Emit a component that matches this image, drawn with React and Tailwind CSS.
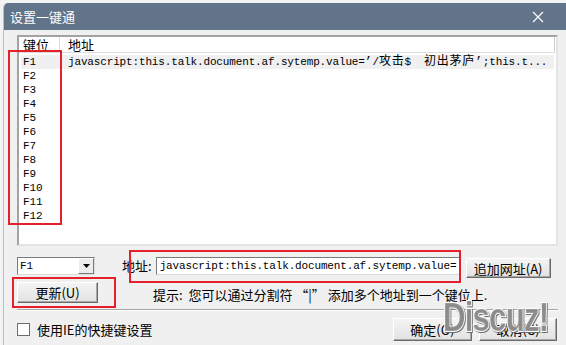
import React from "react";

const mono = "font-['Liberation_Mono','Noto_Sans_CJK_SC',monospace] text-[11px] tracking-[-0.15px]";
const cjk = "font-['Noto_Sans_CJK_SC',sans-serif]";

function Btn({ className = "", children }) {
  return (
    <div
      className={`flex items-center justify-center bg-gradient-to-b from-[#f4f4f4] to-[#e2e2e2] border border-t-white border-l-white border-r-[#6a6a6a] border-b-[#6a6a6a] shadow-[inset_-1px_-1px_0_#a8a8a8] text-[13px] leading-none text-black ${cjk} ${className}`}
    >
      {children}
    </div>
  );
}

export default function App() {
  const keys = ["F1", "F2", "F3", "F4", "F5", "F6", "F7", "F8", "F9", "F10", "F11", "F12"];
  return (
    <div className={`relative w-[566px] h-[345px] overflow-hidden bg-[#f3f3f3] pt-[3px] pl-[3px] ${cjk}`}>
      <div className="w-[563px] h-[342px] flex flex-col bg-[#f0f0f0] rounded-tl-[5px] overflow-hidden border-l border-[#bdbdbd]">
        {/* Title bar */}
        <div className="h-[27px] shrink-0 bg-[#627489] flex items-center justify-between pl-[6px] pr-[22px]">
          <span className="text-white text-[13px] leading-none">设置一键通</span>
          <svg width="12" height="12" viewBox="0 0 12 12">
            <path d="M1 1 L11 11 M11 1 L1 11" stroke="#ffffff" strokeWidth="1.2" fill="none" />
          </svg>
        </div>

        {/* Body */}
        <div className="flex-1 flex flex-col pl-[13px] pr-[8px] pt-[5px]">
          {/* List view */}
          <div className="h-[211px] w-[541px] bg-white border-2 border-t-[#a3a3a3] border-l-[#a3a3a3] border-r-[#e4e4e4] border-b-[#e4e4e4] flex flex-col overflow-hidden">
            <div className="flex h-[16px] shrink-0 border-b border-[#dcdcdc] text-[13px] leading-[16px] text-black mr-[1px]">
              <div className="w-[41px] pl-[4px] border-r border-[#dcdcdc]">键位</div>
              <div className="flex-1 pl-[8px] border-r border-[#cfcfcf]">地址</div>
            </div>
            <div className="pt-[2px] flex flex-col">
              {keys.map((k, i) => (
                <div
                  key={k}
                  className={`flex h-[14px] items-center ml-[2px] mr-[2px] ${i === 0 ? "bg-[#f0f0f0]" : ""}`}
                >
                  <div className={`w-[39px] pl-[2px] text-black ${mono}`}>{k}</div>
                  <div className={`flex-1 pl-[8px] text-black whitespace-pre overflow-hidden ${mono}`}>
                    {i === 0 ? (
                      <>
                        {"javascript:this.talk.document.af.sytemp.value="}
                        <span className="text-[12px] tracking-[0.5px]">’</span>
                        {"/"}
                        <span className="text-[12px] tracking-[0.8px]">攻击</span>
                        {"$  "}
                        <span className="text-[12px] tracking-[0.8px]">初出茅庐</span>
                        <span className="text-[12px] tracking-[0.5px]">’</span>
                        {";this.t..."}
                      </>
                    ) : null}
                  </div>
                </div>
              ))}
            </div>
          </div>

          {/* Row 1 */}
          <div className="flex items-start mt-[11px] h-[21px]">
            <div className="w-[78px] h-[18px] flex bg-white border border-t-[#7a7a7a] border-l-[#7a7a7a] border-r-[#dadada] border-b-[#dadada]">
              <div className={`flex-1 pl-[2px] leading-[16px] text-black ${mono}`}>F1</div>
              <div className="w-[16px] h-full flex items-center justify-center bg-[#ececec] border border-t-white border-l-white border-r-[#7a7a7a] border-b-[#7a7a7a]">
                <svg width="7" height="4" viewBox="0 0 7 4">
                  <path d="M0 0 L7 0 L3.5 4 Z" fill="#000" />
                </svg>
              </div>
            </div>
            <span className="ml-[27px] text-[13px] leading-[18px] text-black">地址:</span>
            <div className="ml-[4px] w-[305px] h-[18px] bg-white border border-t-[#7a7a7a] border-l-[#7a7a7a] border-r-[#dadada] border-b-[#dadada] overflow-hidden">
              <div className={`pl-[3px] leading-[16px] text-black whitespace-pre ${mono}`}>
                {"javascript:this.talk.document.af.sytemp.value="}
              </div>
            </div>
            <Btn className="ml-[5px] mt-[1px] w-[85px] h-[20px]">追加网址(A)</Btn>
          </div>

          {/* Row 2 */}
          <div className="flex items-center mt-[4px] h-[21px]">
            <Btn className="w-[81px] h-[21px]">更新(U)</Btn>
            <span className="ml-[55px] mt-[4px] text-[13px] leading-none text-black whitespace-pre">
              {"提示:  您可以通过分割符 “|” 添加多个地址到一个键位上."}
            </span>
          </div>

          {/* Separator */}
          <div className="mt-[6px] h-[2px] border-t border-[#a8a8a8] border-b border-b-white" />

          {/* Row 3 */}
          <div className="flex items-center mt-[7px] h-[23px]">
            <div className="w-[13px] h-[13px] bg-white border border-[#6e6e6e]" />
            <span className="ml-[7px] text-[13px] leading-none text-black">使用IE的快捷键设置</span>
            <div className="flex-1" />
            <Btn className="w-[79px] h-[23px]">确定(O)</Btn>
            <Btn className="ml-[7px] w-[78px] h-[23px] mr-[1px]">取消(C)</Btn>
          </div>
        </div>
      </div>

      {/* Annotation boxes */}
      <div className="absolute left-[8px] top-[50px] w-[54px] h-[175px] border-2 border-[#e4212b]" />
      <div className="absolute left-[129px] top-[250px] w-[332px] h-[33px] border-2 border-[#e4212b]" />
      <div className="absolute left-[12px] top-[277px] w-[104px] h-[31px] border-2 border-[#e4212b]" />

      {/* Watermark */}
      <div className="absolute left-[441px] top-[297px] w-[110px] flex justify-center">
        <span className="font-['Liberation_Sans',sans-serif] font-bold text-[40px] leading-none text-[#8e8e8e]/90 tracking-[-1px] [-webkit-text-stroke:2px_#ffffff] [paint-order:stroke_fill] scale-x-[0.78] drop-shadow-[1px_1px_0_#6a6a6a]">
          Discuz!
        </span>
      </div>
    </div>
  );
}
